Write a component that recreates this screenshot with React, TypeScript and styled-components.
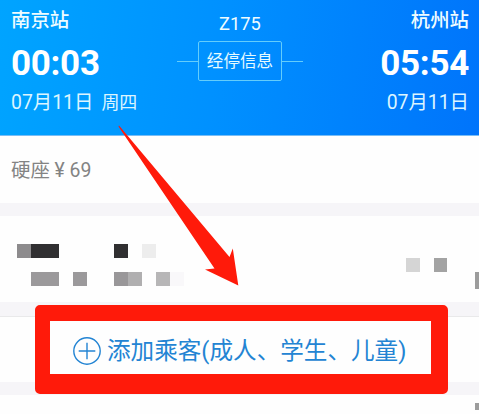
import React from "react";
import styled, { createGlobalStyle } from "styled-components";

const GlobalStyle = createGlobalStyle`
  body { margin: 0; background: #fefefe; overflow: hidden; }
  * { box-sizing: border-box; }
`;

const Screen = styled.main`
  position: relative;
  width: 479px;
  height: 414px;
  overflow: hidden;
  background: #fefefe;
  font-family: Roboto, "Noto Sans CJK SC", sans-serif;
  white-space: nowrap;
`;

const Header = styled.header`
  display: flex;
  justify-content: space-between;
  height: 136px;
  padding: 9px 10px 0 11px;
  color: #effcff;
  background: linear-gradient(97deg, #00a4ff 0%, #0091ff 45%, #0074fb 100%);
  border-bottom: 1px solid #79bdf5;
`;

const Stop = styled.section<{ $end?: boolean }>`
  display: flex;
  flex-direction: column;
  align-items: ${(p) => (p.$end ? "flex-end" : "flex-start")};
  width: 150px;
`;

const Station = styled.div`
  height: 24px;
  font-size: 19.4px;
  line-height: 24px;
  font-weight: 500;
`;

const Time = styled.div`
  height: 44px;
  margin-top: 9px;
  font-size: 35px;
  line-height: 44px;
  font-weight: 700;
  letter-spacing: -0.3px;
  color: #fff;
`;

const DateLine = styled.div`
  display: flex;
  gap: 8px;
  height: 24px;
  margin-top: 5px;
  font-size: 19.4px;
  line-height: 24px;
  color: #dcf5ff;
`;

const Weekday = styled.span`
  font-size: 18px;
`;

const Route = styled.section`
  display: flex;
  flex-direction: column;
  align-items: center;
  width: 126px;
  padding-top: 4px;
`;

const TrainNumber = styled.div`
  height: 22px;
  font-size: 18.3px;
  line-height: 22px;
`;

const StopsLine = styled.div`
  display: flex;
  align-items: center;
  width: 126px;
  margin-top: 6px;
  &::before,
  &::after {
    content: "";
    flex: 1;
    height: 1px;
    background: #64cdfb;
  }
`;

const StopsButton = styled.button`
  width: 84px;
  height: 40px;
  padding: 2px 0 0;
  font: inherit;
  font-size: 16.6px;
  line-height: 36px;
  color: #e6fbff;
  background: transparent;
  border: 1px solid #64cdfb;
  border-radius: 2px;
`;

const FareRow = styled.div`
  height: 67px;
  padding: 22px 11px 0;
  font-size: 19.4px;
  line-height: 26px;
  color: #838383;
`;

const Divider = styled.div<{ $line?: boolean }>`
  height: ${(p) => (p.$line ? 15 : 13)}px;
  background: #f6f5f8;
  border-bottom: ${(p) => (p.$line ? "1px solid #e9e9ea" : "none")};
`;

const Passenger = styled.div`
  display: grid;
  grid-template-columns: repeat(34, 13.88px);
  grid-template-rows: repeat(3, 14px);
  height: 86px;
  padding: 28px 0 0 17.3px;
`;

const Cell = styled.i<{ $row: number; $col: number; $span?: number; $color: string; $height?: number }>`
  grid-row: ${(p) => p.$row};
  grid-column: ${(p) => p.$col} / span ${(p) => p.$span ?? 1};
  height: ${(p) => p.$height ?? 14}px;
  background: ${(p) => p.$color};
`;

const AddRow = styled.div`
  display: flex;
  align-items: center;
  height: 65px;
  padding-left: 72px;
  color: #2384d3;
`;

const AddIcon = styled.svg`
  flex: none;
  width: 30px;
  height: 30px;
  margin-top: 3px;
  fill: none;
  stroke: currentColor;
  stroke-width: 1.4;
`;

const AddLabel = styled.span`
  margin-left: 5px;
  padding-top: 2px;
  font-size: 23.6px;
  line-height: 32px;
`;

const Footer = styled.div`
  display: flex;
  justify-content: flex-end;
  height: 18px;
  padding-top: 8px;
`;

const FooterCell = styled.i`
  width: 4px;
  height: 7px;
  background: #9c9c9c;
`;

const Highlight = styled.div`
  position: absolute;
  left: 35px;
  top: 305px;
  width: 413px;
  height: 89px;
  border: solid #ff1a0a;
  border-width: 16px 17px 20px 15px;
  border-radius: 5px;
`;

const Arrow = styled.svg`
  position: absolute;
  left: 0;
  top: 0;
  width: 479px;
  height: 414px;
  fill: #ff1a0a;
  pointer-events: none;
`;

const cells = [
  { row: 1, col: 1, color: "#8d8b8d" },
  { row: 1, col: 2, span: 2, color: "#302f31" },
  { row: 1, col: 8, color: "#302f31" },
  { row: 1, col: 10, color: "#ededed" },
  { row: 2, col: 29, color: "#d5d5d5" },
  { row: 2, col: 31, color: "#a3a3a3" },
  { row: 3, col: 2, span: 2, color: "#9b999b" },
  { row: 3, col: 5, color: "#9b999b" },
  { row: 3, col: 8, color: "#999799" },
  { row: 3, col: 9, color: "#b0afb0" },
  { row: 3, col: 11, color: "#b7b6b7" },
  { row: 3, col: 12, color: "#f9f8fa" },
  { row: 3, col: 34, color: "#9c9c9c", height: 17 },
];

export default function App() {
  return (
    <>
      <GlobalStyle />
      <Screen>
        <Header>
          <Stop>
            <Station>南京站</Station>
            <Time>00:03</Time>
            <DateLine>
              <span>07月11日</span>
              <Weekday>周四</Weekday>
            </DateLine>
          </Stop>
          <Route>
            <TrainNumber>Z175</TrainNumber>
            <StopsLine>
              <StopsButton>经停信息</StopsButton>
            </StopsLine>
          </Route>
          <Stop $end>
            <Station>杭州站</Station>
            <Time>05:54</Time>
            <DateLine>07月11日</DateLine>
          </Stop>
        </Header>
        <FareRow>硬座 ¥ 69</FareRow>
        <Divider />
        <Passenger>
          {cells.map((c) => (
            <Cell key={`${c.row}-${c.col}`} $row={c.row} $col={c.col} $span={c.span} $color={c.color} $height={c.height} />
          ))}
        </Passenger>
        <Divider $line />
        <AddRow>
          <AddIcon viewBox="0 0 30 30">
            <circle cx="15" cy="15" r="13.2" />
            <path d="M15 6.7v16.6M6.7 15h16.6" />
          </AddIcon>
          <AddLabel>添加乘客(成人、学生、儿童)</AddLabel>
        </AddRow>
        <Divider />
        <Footer>
          <FooterCell />
        </Footer>
        <Highlight />
        <Arrow viewBox="0 0 479 414">
          <path d="M119 125.5L229.5 257L232.8 248.5L238.3 285.5L205 269.5L214.5 268.5L118.5 126.5Z" />
        </Arrow>
      </Screen>
    </>
  );
}
